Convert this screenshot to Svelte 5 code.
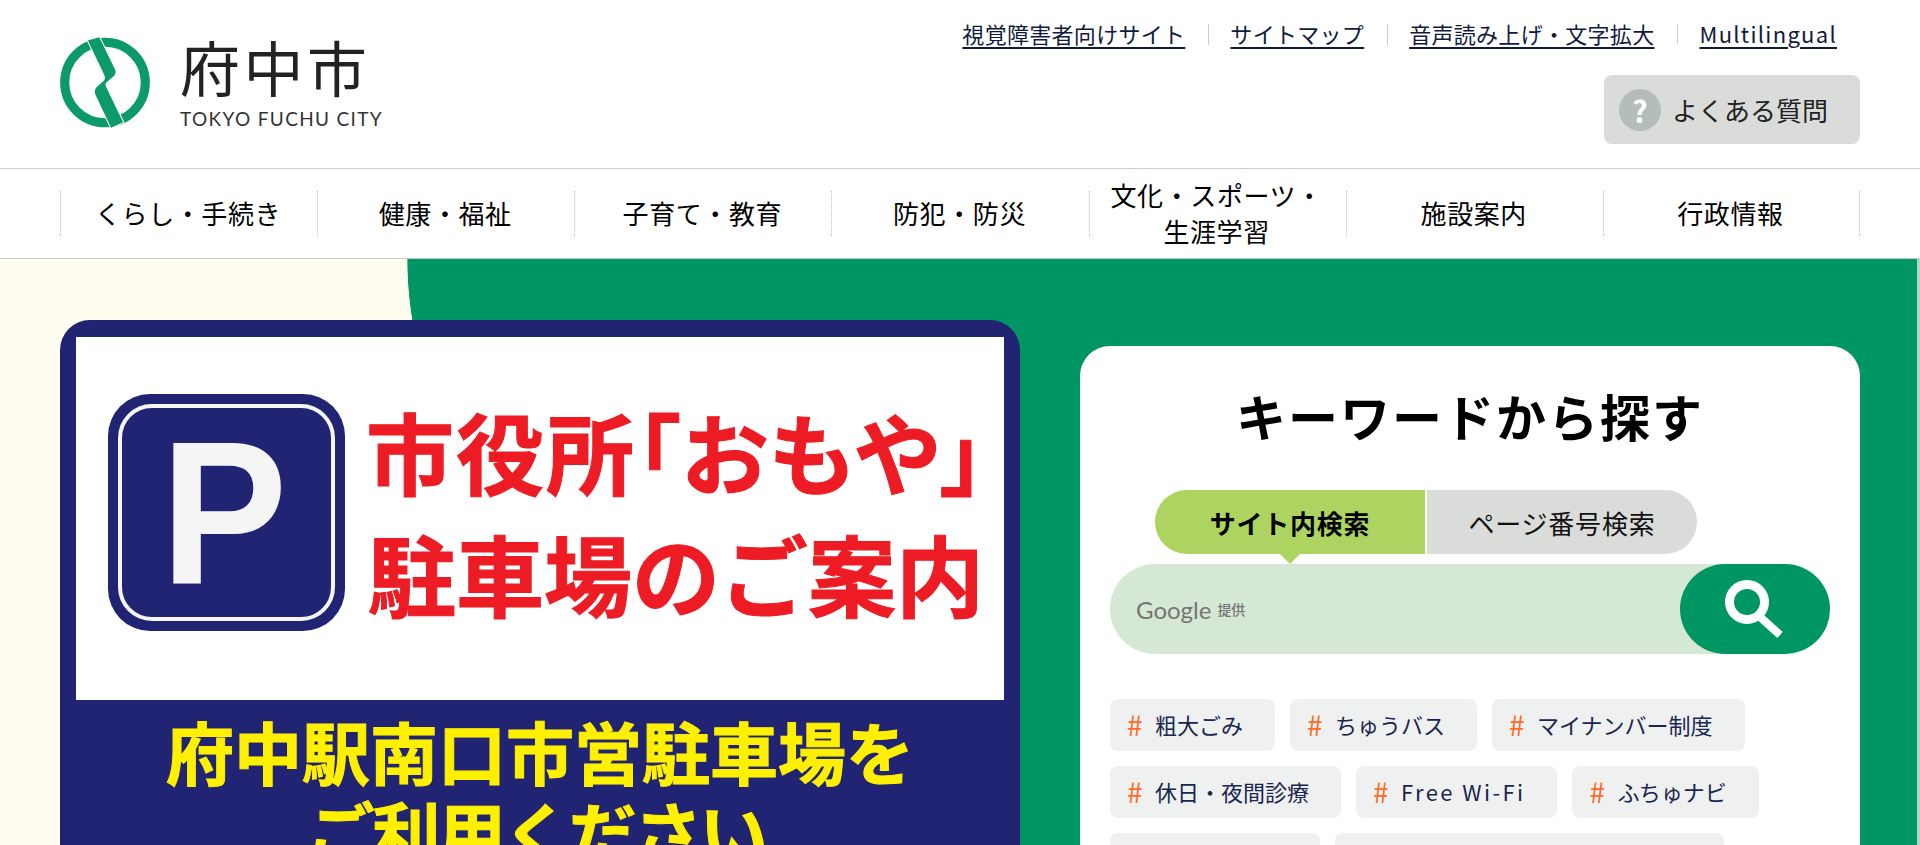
<script lang="ts">
	const links = ['視覚障害者向けサイト', 'サイトマップ', '音声読み上げ・文字拡大', 'Multilingual'];
	const navItems = ['くらし・手続き', '健康・福祉', '子育て・教育', '防犯・防災', '文化・スポーツ・生涯学習', '施設案内', '行政情報'];
	const tags = ['粗大ごみ', 'ちゅうバス', 'マイナンバー制度', '休日・夜間診療', 'Free Wi-Fi', 'ふちゅナビ'];
	const isLatin = (text: string) => /^[A-Za-z]/.test(text);
</script>

<header class="header">
	<a class="logo" href="#top">
		<svg class="mark" viewBox="60 53 268 268" aria-hidden="true">
			<circle cx="194" cy="187" r="120" fill="none" stroke="#0b9a68" stroke-width="27" />
			<path
				d="M143 62 L177 52 L224 148 Q229 160 218 170 L197 188 Q193 193 197 200 L248 305 L212 322 L165 222 Q160 208 172 198 L192 180 Q196 174 192 165 Z"
				fill="#0b9a68"
				stroke="#fff"
				stroke-width="6"
				paint-order="stroke"
			/>
		</svg>
		<span class="logo-text">
			<span class="logo-ja">府中市</span>
			<span class="logo-en">TOKYO FUCHU CITY</span>
		</span>
	</a>
	<div class="utility">
		<ul class="links">
			{#each links as link}
				<li><a href="#top" class:latin={isLatin(link)}>{link}</a></li>
			{/each}
		</ul>
		<a class="faq" href="#top"><span class="faq-icon">?</span>よくある質問</a>
	</div>
</header>

<nav class="nav">
	<ul>
		{#each navItems as item}
			<li><a href="#top">{item}</a></li>
		{/each}
	</ul>
</nav>

<main class="main">
	<div class="banner">
		<div class="banner-panel">
			<div class="p-sign"><span><b>P</b></span></div>
			<div class="banner-title">
				<span class="palt">市役所「おもや」</span>
				<span>駐車場のご案内</span>
			</div>
		</div>
		<p class="banner-note">府中駅南口市営駐車場を<br /><span>ご利用ください</span></p>
	</div>

	<section class="card">
		<h2>キーワードから探す</h2>
		<div class="tabs">
			<button class="tab active">サイト内検索</button>
			<button class="tab">ページ番号検索</button>
		</div>
		<div class="search">
			<span class="google">Google<small>提供</small></span>
			<button class="search-btn" aria-label="検索">
				<svg viewBox="0 0 60 58" width="60" height="58" aria-hidden="true">
					<circle cx="22" cy="22" r="17.5" fill="none" stroke="#fff" stroke-width="9" />
					<path d="M34 36 L55 55" stroke="#fff" stroke-width="8" fill="none" />
				</svg>
			</button>
		</div>
		<ul class="tags">
			{#each tags as tag}
				<li class:latin={isLatin(tag)}><span class="hash">#</span>{tag}</li>
			{/each}
			<li class="tag-a"></li>
			<li class="tag-b"></li>
		</ul>
	</section>
</main>

<style>
	:global(body) {
		font-family: 'Noto Sans CJK JP', 'Noto Sans', sans-serif;
		color: #000;
		overflow: hidden;
	}
	a {
		color: inherit;
		text-decoration: none;
	}
	ul {
		list-style: none;
		margin: 0;
		padding: 0;
	}
	button {
		border: 0;
		font: inherit;
		color: inherit;
		padding: 0;
	}

	.header {
		height: 168px;
		padding: 0 60px;
		display: flex;
		justify-content: space-between;
		border-bottom: 1px solid #ccc;
	}
	.logo {
		display: flex;
		gap: 30px;
		padding-top: 37px;
		align-items: flex-start;
	}
	.mark {
		width: 90px;
		height: 91px;
	}
	.logo-text {
		display: flex;
		flex-direction: column;
		color: #222;
	}
	.logo-ja {
		font-size: 60px;
		line-height: 68px;
		letter-spacing: 3.5px;
		margin-top: -5px;
	}
	.logo-en {
		font-family: 'Lato', sans-serif;
		font-size: 19px;
		line-height: 24px;
		letter-spacing: 1.35px;
		color: #333;
		margin-top: 7px;
	}

	.utility {
		display: flex;
		flex-direction: column;
		align-items: flex-end;
	}
	.links {
		display: flex;
		margin-top: 18px;
		margin-right: 23px;
	}
	.links li {
		font-size: 22px;
		line-height: 30px;
		letter-spacing: 0.3px;
		color: #12193f;
		padding-left: 22px;
		margin-left: 23px;
		position: relative;
	}
	.links li::before {
		content: '';
		position: absolute;
		left: 0;
		top: 6px;
		height: 21px;
		border-left: 1px solid #ccc;
	}
	.links li:first-child::before {
		display: none;
	}
	.links a {
		text-decoration: underline;
		text-decoration-thickness: 2px;
		text-underline-offset: 4px;
	}
	.links a.latin {
		letter-spacing: 1.3px;
	}
	.faq {
		margin-top: 27px;
		width: 256px;
		height: 69px;
		box-sizing: border-box;
		padding-left: 15px;
		background: #dadcda;
		border-radius: 8px;
		display: flex;
		align-items: center;
		gap: 11px;
		font-size: 26px;
		color: #222;
	}
	.faq-icon {
		width: 42px;
		height: 42px;
		border-radius: 50%;
		background: #b5bdb9;
		color: #fff;
		font-size: 30px;
		font-weight: 700;
		display: flex;
		align-items: center;
		justify-content: center;
	}

	.nav {
		height: 89px;
		border-bottom: 1px solid #ccc;
		padding: 0 60px;
	}
	.nav ul {
		display: grid;
		grid-template-columns: repeat(7, 1fr);
		padding-top: 22px;
	}
	.nav li {
		height: 45px;
		border-left: 1px dotted #bbb;
		display: flex;
		align-items: center;
		justify-content: center;
		text-align: center;
		font-size: 26px;
		line-height: 36px;
		letter-spacing: 0.6px;
		padding: 0 10px;
	}
	.nav li a {
		margin: -2px 2px 0 0;
	}
	.nav li:last-child {
		border-right: 1px dotted #bbb;
	}

	.main {
		height: 586px;
		overflow: hidden;
		box-sizing: border-box;
		padding: 0 60px;
		display: flex;
		gap: 60px;
		align-items: flex-start;
		background:
			linear-gradient(#a5dbc7, #a5dbc7) right / 3px 100% no-repeat,
			radial-gradient(circle 375px at 782px 0, #009663 99.8%, transparent 100%),
			linear-gradient(#009663, #009663) right / 1138px 100% no-repeat,
			#fffdf0;
	}

	.banner {
		flex: 0 0 960px;
		height: 640px;
		margin-top: 61px;
		background: #212373;
		border-radius: 30px 30px 0 0;
		padding: 17px 16px 0;
		box-sizing: border-box;
	}
	.banner-panel {
		background: #fff;
		height: 363px;
		display: flex;
		align-items: flex-start;
		padding: 57px 0 0 32px;
		box-sizing: border-box;
		gap: 23px;
	}
	.p-sign {
		width: 237px;
		height: 237px;
		flex: none;
		background: #212373;
		border-radius: 42px;
		padding: 10px;
		box-sizing: border-box;
	}
	.p-sign span {
		height: 100%;
		border: 4px solid #f5f5f5;
		border-radius: 34px;
		box-sizing: border-box;
		display: flex;
		align-items: center;
		justify-content: center;
		font-family: 'Liberation Sans', sans-serif;
		font-weight: 700;
		font-size: 204px;
		color: #f5f5f5;
		line-height: 1;
	}
	.p-sign b {
		transform: translateX(-2px) scaleX(0.93);
	}
	.banner-title {
		display: flex;
		flex-direction: column;
		font-size: 88px;
		font-weight: 700;
		-webkit-text-stroke: 1px #ed1c24;
		line-height: 122px;
		color: #ed1c24;
		white-space: nowrap;
		margin-top: -5px;
	}
	.palt {
		font-feature-settings: 'palt';
		letter-spacing: 2px;
		margin-left: -2px;
	}
	.banner-note {
		margin: 11px 0 0;
		text-align: center;
		font-size: 68px;
		font-weight: 700;
		-webkit-text-stroke: 1px #fff000;
		line-height: 80px;
		color: #fff000;
	}
	.banner-note span {
		display: inline-block;
		letter-spacing: -2.5px;
		margin-left: -8px;
	}

	.card {
		flex: 0 0 780px;
		height: 700px;
		margin-top: 87px;
		background: #fff;
		border-radius: 30px;
		padding: 34px 30px 0;
		box-sizing: border-box;
	}
	h2 {
		margin: 0;
		text-align: center;
		font-size: 50px;
		font-weight: 700;
		line-height: 70px;
		letter-spacing: 0.04em;
	}
	.tabs {
		display: flex;
		gap: 2px;
		margin: 40px 0 0 45px;
	}
	.tab {
		width: 270px;
		height: 64px;
		font-size: 26px;
		letter-spacing: 0.03em;
		background: #dadcda;
		color: #111;
		border-radius: 0 32px 32px 0;
		position: relative;
	}
	.tab.active {
		background: #add460;
		color: #000;
		font-weight: 700;
		border-radius: 32px 0 0 32px;
	}
	.tab.active::after {
		content: '';
		position: absolute;
		left: 125px;
		top: 100%;
		border: 10px solid transparent;
		border-top-color: #add460;
		border-bottom: 0;
	}
	.search {
		margin-top: 10px;
		height: 90px;
		border-radius: 45px;
		background: #d5e8d4;
		display: flex;
		align-items: center;
		justify-content: space-between;
		padding-left: 26px;
	}
	.google {
		font-family: 'Lato', sans-serif;
		font-size: 24px;
		color: #757575;
		display: flex;
		align-items: center;
		gap: 6px;
	}
	.google small {
		font-family: 'Noto Sans CJK JP', sans-serif;
		font-size: 14px;
		font-weight: 500;
	}
	.search-btn {
		width: 150px;
		height: 90px;
		border-radius: 45px;
		background: #009663;
		display: flex;
		align-items: center;
		justify-content: center;
	}
	.tags {
		display: flex;
		flex-wrap: wrap;
		gap: 15px;
		margin-top: 45px;
	}
	.tags li {
		height: 52px;
		box-sizing: border-box;
		padding: 0 32px 2px 17px;
		background: #eff1f1;
		border-radius: 8px;
		display: flex;
		align-items: center;
		font-size: 22px;
		color: #1a2550;
	}
	.tags li.latin {
		letter-spacing: 2.4px;
	}
	.hash {
		color: #ff6a26;
		font-size: 28px;
		width: 28px;
		letter-spacing: 0;
		flex: none;
	}
	.tags .tag-a {
		width: 210px;
	}
	.tags .tag-b {
		width: 389px;
	}
</style>
